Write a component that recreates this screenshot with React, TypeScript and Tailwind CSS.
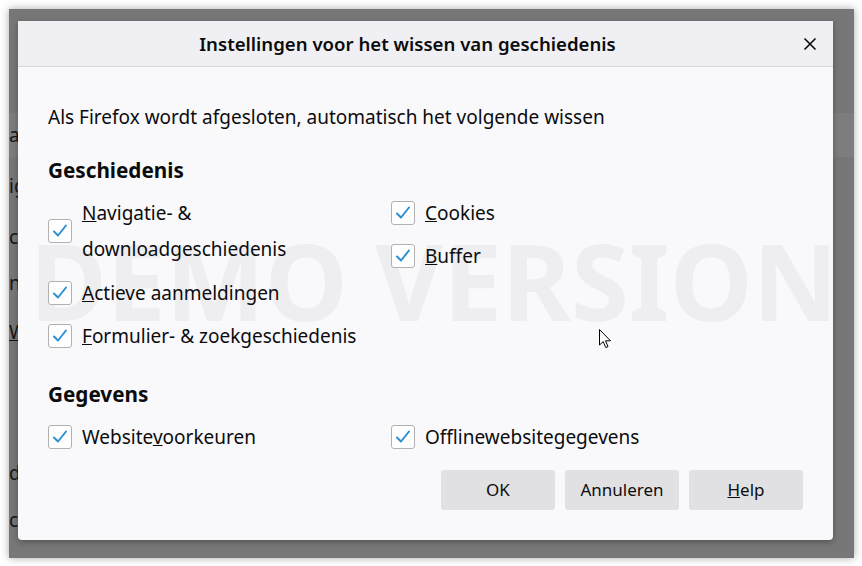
import React from "react";

const font = { fontFamily: '"Noto Sans", "Open Sans", sans-serif' };

function Check() {
  return (
    <div className="w-[24px] h-[24px] shrink-0 rounded-[3px] border border-[#b1b1b3] bg-white flex items-center justify-center">
      <svg width="22" height="22" viewBox="0 0 22 22">
        <path
          d="M5 11.5 L9 15.5 L17 5.5"
          fill="none"
          stroke="#2e8fd2"
          strokeWidth="2"
          strokeLinecap="round"
          strokeLinejoin="round"
        />
      </svg>
    </div>
  );
}

function Item({ children, tall }: { children: React.ReactNode; tall?: boolean }) {
  return (
    <div className={tall ? "flex items-center py-1" : "flex items-center h-[43px]"}>
      <Check />
      <div className={tall ? "ml-[10px] leading-[36px] whitespace-nowrap" : "ml-[10px] leading-[26px] whitespace-nowrap"}>
        {children}
      </div>
    </div>
  );
}

function Btn({ children }: { children: React.ReactNode }) {
  return (
    <button className="w-[114px] h-[40px] rounded-[3px] bg-[#e1e1e3] text-[17px] text-[#0c0c0d]">
      {children}
    </button>
  );
}

export default function App() {
  return (
    <div className="w-[862px] h-[566px] bg-white overflow-hidden pl-[9px] pt-[9px]" style={font}>
      <div className="relative w-[845px] h-[549px] bg-[#777777] shadow-[0_0_8px_rgba(0,0,0,0.35)]">
        {/* page behind the dialog */}
        <div className="flex flex-col text-[19px] text-[#161616] pt-[104px]">
          <div className="h-[44px] bg-[#7d7d7d] leading-[44px]">as</div>
          <div className="h-[48px] leading-[48px] mt-[5px]">ig</div>
          <div className="h-[54px] leading-[54px]">c</div>
          <div className="h-[38px] leading-[38px]">nu</div>
          <div className="h-[60px] leading-[60px] underline">W</div>
          <div className="h-[48px] leading-[48px] mt-[87px]">dr</div>
          <div className="h-[46px] leading-[46px]">c</div>
        </div>

        {/* dialog */}
        <div className="absolute left-[9px] top-[12px] w-[815px] h-[519px] bg-[#f9f9fb] rounded-b-[4px] shadow-[0_2px_6px_rgba(0,0,0,0.3)] overflow-hidden text-[#0c0c0d]">
          <div className="relative h-[46px] bg-[#f0f0f4] border-b border-[#d7d7db] flex items-center justify-center pr-[36px]">
            <span className="text-[18.6px] font-semibold">Instellingen voor het wissen van geschiedenis</span>
            <svg className="absolute right-[16px] top-[16px]" width="14" height="14" viewBox="0 0 14 14">
              <path d="M1.5 1.5 L12.5 12.5 M12.5 1.5 L1.5 12.5" stroke="#0c0c0d" strokeWidth="1.6" />
            </svg>
          </div>

          <div className="absolute left-[12px] top-[207px] text-[105px] font-bold leading-none text-[#eeeef0] whitespace-nowrap select-none">
            DEMO VERSION
          </div>

          <div className="relative px-[30px] text-[19px]">
            <div className="mt-[37px] leading-[26px]">Als Firefox wordt afgesloten, automatisch het volgende wissen</div>
            <div className="mt-[27px] leading-[26px] text-[20.7px] font-bold">Geschiedenis</div>
            <div className="mt-[8px] grid grid-cols-[343px_1fr]">
              <div className="flex flex-col">
                <Item tall>
                  <span className="underline">N</span>avigatie- &amp;
                  <br />
                  downloadgeschiedenis
                </Item>
                <Item>
                  <span className="underline">A</span>ctieve aanmeldingen
                </Item>
                <Item>
                  <span className="underline">F</span>ormulier- &amp; zoekgeschiedenis
                </Item>
              </div>
              <div className="flex flex-col">
                <Item>
                  <span className="underline">C</span>ookies
                </Item>
                <Item>
                  <span className="underline">B</span>uffer
                </Item>
              </div>
            </div>
            <div className="mt-[24px] leading-[26px] text-[20.7px] font-bold">Gegevens</div>
            <div className="mt-[8px] grid grid-cols-[343px_1fr]">
              <Item>
                Website<span className="underline">v</span>oorkeuren
              </Item>
              <Item>Offlinewebsitegegevens</Item>
            </div>
            <div className="mt-[12px] flex justify-end gap-[10px]">
              <Btn>OK</Btn>
              <Btn>Annuleren</Btn>
              <Btn>
                <span className="underline">H</span>elp
              </Btn>
            </div>
          </div>

          <svg className="absolute left-[581px] top-[308px]" width="13" height="20" viewBox="0 0 13 20">
            <path d="M0.5 0.5 L0.5 16 L4.2 12.6 L6.8 18.6 L9 17.6 L6.5 11.8 L11.5 11.8 Z" fill="#fff" stroke="#000" strokeWidth="1" />
          </svg>
        </div>
      </div>
    </div>
  );
}
